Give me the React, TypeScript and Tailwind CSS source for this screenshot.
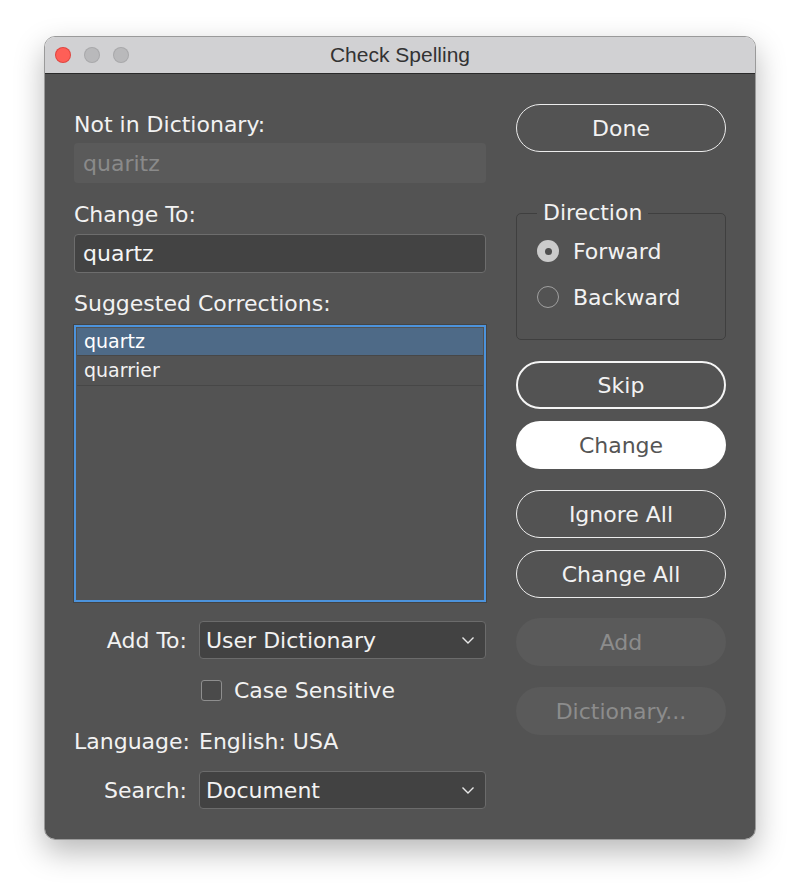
import React from "react";

const body = { fontFamily: '"DejaVu Sans", "Noto Sans", sans-serif' };

function Chevron() {
  return (
    <svg width="14" height="9" viewBox="0 0 14 9" className="shrink-0">
      <path d="M1.5 1.5 L7 7 L12.5 1.5" fill="none" stroke="#e8e8e8" strokeWidth="1.4" />
    </svg>
  );
}

function Select({ value }: { value: string }) {
  return (
    <div className="flex h-[38px] flex-1 items-center justify-between rounded-[4px] border-[1.5px] border-[#6b6b6b] bg-[#424242] pl-[6px] pr-[10px] text-[22px] text-[#f2f2f2]">
      <span>{value}</span>
      <Chevron />
    </div>
  );
}

type BtnKind = "normal" | "focus" | "primary" | "disabled";

function Btn({ label, kind = "normal", mt }: { label: string; kind?: BtnKind; mt: string }) {
  const styles: Record<BtnKind, string> = {
    normal: "border-[1.5px] border-[#ececec] text-[#f2f2f2]",
    focus: "border-[2.5px] border-[#f5f5f5] text-[#f2f2f2]",
    primary: "bg-white text-[#555555]",
    disabled: "bg-[#5a5a5a] text-[#8c8c8c]",
  };
  return (
    <div className={`flex h-[48px] items-center justify-center rounded-full text-[22px] ${styles[kind]} ${mt}`}>
      {label}
    </div>
  );
}

export default function App() {
  return (
    <div className="min-h-[890px] w-full bg-white pt-[36px]">
      <div className="mx-auto w-[712px] overflow-hidden rounded-[11px] border border-[#9a9a9a] shadow-[0_12px_30px_rgba(0,0,0,0.28)]">
        {/* title bar */}
        <div className="relative flex h-[37px] items-center justify-center border-b border-[#2a2a2a] bg-[#d1d1d3]">
          <div className="absolute left-[11px] top-[11px] flex gap-[15px]">
            <span className="h-[14px] w-[14px] rounded-full bg-[#fe5f57] ring-1 ring-[#e0443e]" />
            <span className="h-[14px] w-[14px] rounded-full bg-[#b9b9bb] ring-1 ring-[#a8a8aa]" />
            <span className="h-[14px] w-[14px] rounded-full bg-[#b9b9bb] ring-1 ring-[#a8a8aa]" />
          </div>
          <span className="text-[21px] text-[#333333]" style={{ fontFamily: '"Liberation Sans", Arial, sans-serif' }}>
            Check Spelling
          </span>
        </div>

        {/* body */}
        <div className="flex gap-[30px] bg-[#535353] px-[29px] pb-[30px] pt-[30px]" style={body}>
          {/* left column */}
          <div className="flex w-[412px] flex-col">
            <div className="mt-[8px] h-[26px] text-[22px] leading-[26px] text-[#f2f2f2]">Not in Dictionary:</div>
            <div className="mt-[5px] flex h-[40px] items-center rounded-[4px] bg-[#5a5a5a] px-[9px] text-[22px] text-[#8a8a8a]">
              quaritz
            </div>
            <div className="mt-[19px] h-[26px] text-[22px] leading-[26px] text-[#f2f2f2]">Change To:</div>
            <div className="mt-[6px] flex h-[39px] items-center rounded-[4px] border-[1.5px] border-[#6d6d6d] bg-[#434343] px-[8px] text-[22px] text-[#f5f5f5]">
              quartz
            </div>
            <div className="mt-[18px] h-[26px] text-[22px] leading-[26px] text-[#f2f2f2]">Suggested Corrections:</div>
            <div className="mt-[8px] h-[277px] border-2 border-[#4c93dc] bg-[#535353] p-[1px] outline outline-1 outline-[#444444]">
              <div className="flex h-[28px] items-center border-b border-[#474747] bg-[#4e6a87] px-[7px] text-[19px] text-white">
                quartz
              </div>
              <div className="flex h-[30px] items-center border-b border-[#474747] px-[7px] text-[19px] text-[#f2f2f2]">
                quarrier
              </div>
            </div>

            <div className="mt-[19px] flex items-center gap-[12px]">
              <span className="w-[113px] text-right text-[22px] text-[#f2f2f2]">Add To:</span>
              <Select value="User Dictionary" />
            </div>
            <div className="mt-[19px] flex h-[24px] items-center pl-[127px]">
              <span className="h-[21px] w-[21px] rounded-[3px] border-[1.5px] border-[#8e8e8e] bg-[#4a4a4a]" />
              <span className="ml-[12px] text-[22px] text-[#f2f2f2]">Case Sensitive</span>
            </div>
            <div className="mt-[26px] flex h-[26px] items-center gap-[12px] text-[22px] text-[#f2f2f2]">
              <span className="w-[113px] text-right">Language:</span>
              <span>English: USA</span>
            </div>
            <div className="mt-[17px] flex items-center gap-[12px]">
              <span className="w-[113px] text-right text-[22px] text-[#f2f2f2]">Search:</span>
              <Select value="Document" />
            </div>
          </div>

          {/* right column */}
          <div className="flex w-[210px] flex-col">
            <Btn label="Done" mt="mt-0" />
            <fieldset className="mt-[48px] h-[140px] rounded-[5px] border-[1.5px] border-[#3f3f3f] px-[20px] pb-[26px]">
              <legend className="px-[6px] text-[22px] leading-[26px] text-[#f2f2f2]">Direction</legend>
              <div className="mt-[12px] flex h-[26px] items-center">
                <span className="flex h-[22px] w-[22px] items-center justify-center rounded-full bg-[#cbcbcb]">
                  <span className="h-[7px] w-[7px] rounded-full bg-[#4f4f4f]" />
                </span>
                <span className="ml-[14px] text-[22px] text-[#f2f2f2]">Forward</span>
              </div>
              <div className="mt-[20px] flex h-[26px] items-center">
                <span className="h-[22px] w-[22px] rounded-full border-[1.5px] border-[#a0a0a0]" />
                <span className="ml-[14px] text-[22px] text-[#f2f2f2]">Backward</span>
              </div>
            </fieldset>
            <Btn label="Skip" kind="focus" mt="mt-[21px]" />
            <Btn label="Change" kind="primary" mt="mt-[12px]" />
            <Btn label="Ignore All" mt="mt-[21px]" />
            <Btn label="Change All" mt="mt-[12px]" />
            <Btn label="Add" kind="disabled" mt="mt-[20px]" />
            <Btn label="Dictionary..." kind="disabled" mt="mt-[21px]" />
          </div>
        </div>
      </div>
    </div>
  );
}
